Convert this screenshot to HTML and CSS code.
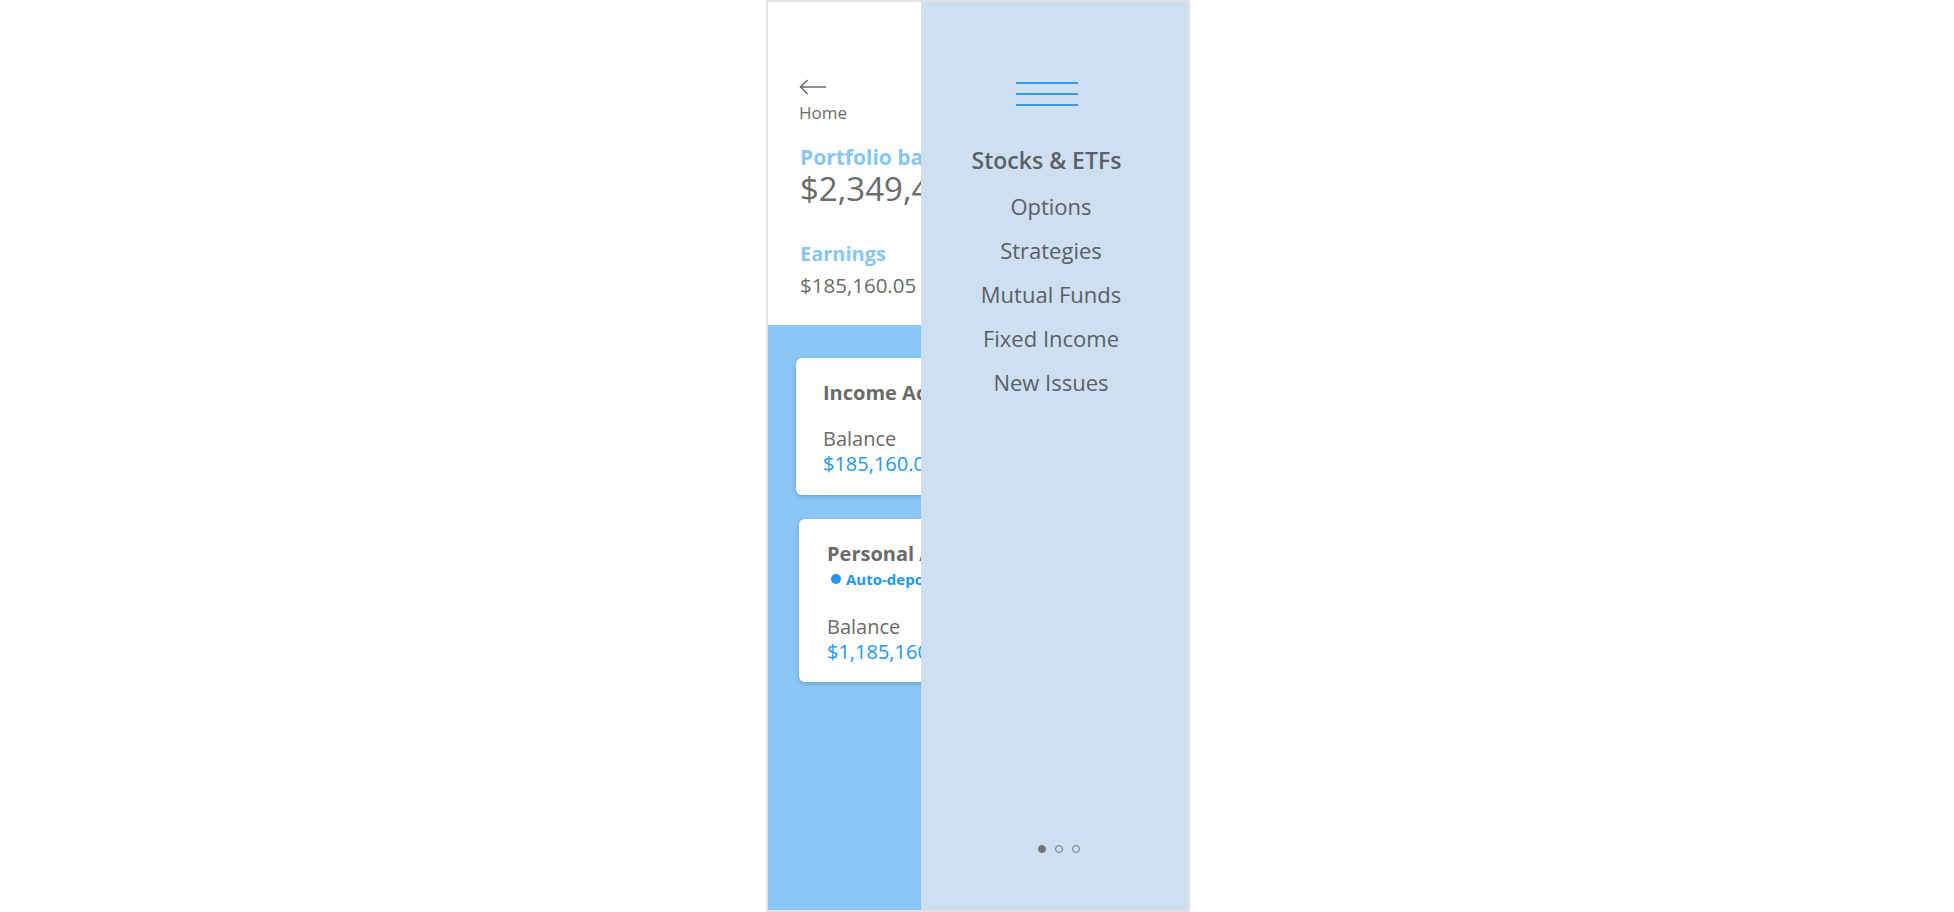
FILE: index.html
```html
<!DOCTYPE html>
<html lang="en">
<head>
<meta charset="utf-8">
<title>Portfolio</title>
<link rel="stylesheet" href="styles.css">
</head>
<body>
<div class="phone">
  <main class="page">
    <header class="summary">
      <svg class="back" width="28" height="16" viewBox="0 0 28 16" aria-hidden="true">
        <path d="M27 8H1.5M8.5 1L1.5 8l7 7" fill="none" stroke="#6b6b6b" stroke-width="1.5"/>
      </svg>
      <div class="back-label">Home</div>
      <div class="label label-portfolio">Portfolio balance</div>
      <div class="big-amount">$2,349,450.36</div>
      <div class="label label-earnings">Earnings</div>
      <div class="amount">$185,160.05</div>
    </header>
    <section class="accounts">
      <div class="card card-income">
        <div class="card-title">Income Account</div>
        <div class="card-balance-label">Balance</div>
        <div class="card-balance">$185,160.05</div>
      </div>
      <div class="card card-personal">
        <div class="card-title">Personal Account</div>
        <div class="badge"><span class="badge-dot"></span>Auto-deposit on</div>
        <div class="card-balance-label card-balance-label-2">Balance</div>
        <div class="card-balance">$1,185,160.05</div>
      </div>
    </section>
  </main>
  <nav class="drawer">
    <div class="burger"><span></span><span></span><span></span></div>
    <div class="menu-head">Stocks &amp; ETFs</div>
    <ul class="menu">
      <li>Options</li>
      <li>Strategies</li>
      <li>Mutual Funds</li>
      <li>Fixed Income</li>
      <li>New Issues</li>
    </ul>
    <div class="dots"><span class="dot on"></span><span class="dot"></span><span class="dot"></span></div>
  </nav>
</div>
</body>
</html>
```

FILE: styles.css
```css
* { box-sizing: border-box; }
html, body { margin: 0; padding: 0; background: #ffffff; }
body {
  font-family: "Open Sans", "Noto Sans", sans-serif;
  color: #666666;
}
.phone {
  position: relative;
  left: 1px;
  width: 424px;
  height: 912px;
  margin: 0 auto;
  border: 2px solid #e2e2e2;
  display: flex;
}
.page {
  width: 153px;
  flex: none;
  height: 100%;
  overflow: hidden;
  display: flex;
  flex-direction: column;
}
.summary {
  background: #ffffff;
  padding: 77px 0 28px 31px;
  height: 323px;
  flex: none;
}
.back { display: block; }
.back-label {
  margin-top: 7px;
  font-size: 17px;
  line-height: 22px;
  color: #6b6b6b;
}
.label {
  margin-left: 1px;
  font-weight: 700;
  color: #89c5f5;
  font-size: 20px;
  line-height: 26px;
  white-space: nowrap;
}
.label-portfolio { margin-top: 20px; font-size: 21px; }
.big-amount {
  margin-left: 1px;
  font-size: 33px;
  line-height: 38px;
  color: #6b6b6b;
  white-space: nowrap;
}
.label-earnings { margin-top: 34px; line-height: 24px; }
.amount {
  margin-left: 1px;
  margin-top: 7px;
  font-size: 20.5px;
  line-height: 24px;
  color: #6b6b6b;
  white-space: nowrap;
}
.accounts {
  flex: 1;
  background: #8bc7f6;
  padding-top: 33px;
}
.card {
  width: 360px;
  background: #ffffff;
  border-radius: 6px;
  box-shadow: 0 2px 5px rgba(40, 80, 120, 0.3);
  white-space: nowrap;
}
.card-income {
  margin-left: 28px;
  height: 137px;
  padding: 23px 0 0 27px;
}
.card-personal {
  margin-left: 31px;
  margin-top: 24px;
  height: 163px;
  padding: 23px 0 0 28px;
}
.card-title {
  font-size: 20px;
  font-weight: 700;
  line-height: 24px;
  color: #6a6a6a;
}
.card-balance-label {
  margin-top: 22px;
  font-size: 20px;
  line-height: 24px;
  color: #6b6b6b;
}
.card-balance-label-2 { margin-top: 26px; }
.card-balance {
  margin-top: 2px;
  font-size: 20px;
  line-height: 22px;
  color: #2196f3;
}
.badge {
  display: flex;
  align-items: center;
  margin-top: 3px;
  margin-left: 4px;
  font-size: 15px;
  font-weight: 700;
  line-height: 20px;
  color: #2196f3;
}
.badge-dot {
  width: 10px;
  height: 10px;
  border-radius: 50%;
  background: #2196f3;
  margin-right: 5px;
}
.drawer {
  flex: 1;
  background: #cddff0;
  display: flex;
  flex-direction: column;
  align-items: center;
  padding-top: 80px;
  padding-bottom: 57px;
  color: #5a6067;
}
.burger {
  width: 62px;
  display: flex;
  flex-direction: column;
  gap: 9px;
  margin-right: 15px;
}
.burger span {
  display: block;
  height: 2px;
  background: #2e9af3;
}
.menu-head {
  margin-top: 39px;
  margin-right: 16px;
  font-size: 23px;
  font-weight: 600;
  line-height: 30px;
}
.menu {
  list-style: none;
  margin: 9px 7px 0 0;
  padding: 0;
  text-align: center;
}
.menu li {
  font-size: 22px;
  line-height: 44px;
}
.dots {
  margin-top: auto;
  margin-left: 9px;
  display: flex;
  gap: 9px;
}
.dot {
  width: 8px;
  height: 8px;
  border-radius: 50%;
  border: 1.5px solid #777777;
}
.dot.on { background: #737373; border-color: #737373; }
```
